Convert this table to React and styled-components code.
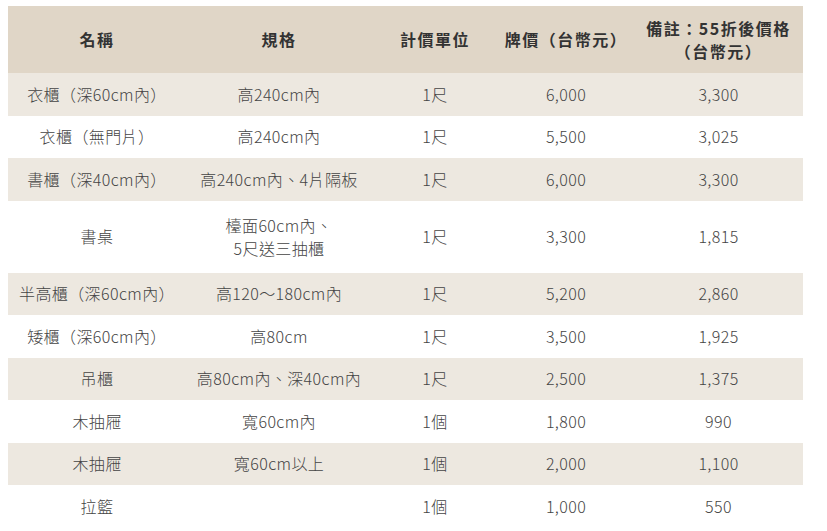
import React from "react";
import styled, { createGlobalStyle } from "styled-components";

const Global = createGlobalStyle`
  html, body { margin: 0; padding: 0; background: #ffffff; }
  body {
    font-family: "Noto Sans CJK TC", "Noto Sans", sans-serif;
  }
`;

const Page = styled.div`
  padding: 6px 24px 0 8px;
`;

const Table = styled.table`
  width: 795px;
  border-collapse: collapse;
  table-layout: fixed;
  font-family: "Noto Sans CJK TC", "Noto Sans", sans-serif;
`;

const HeadCell = styled.th`
  height: 67px;
  padding: 0 2px;
  background: #e0d6c7;
  color: #333333;
  font-size: 16px;
  font-weight: 700;
  line-height: 23px;
  letter-spacing: 1.5px;
  text-align: center;
  vertical-align: middle;
  white-space: nowrap;
`;

const Row = styled.tr`
  background: ${(p) => (p.$shaded ? "#ede8e0" : "#ffffff")};
`;

const Cell = styled.td`
  height: ${(p) => (p.$tall ? 72 : 42.5)}px;
  padding: 0 4px;
  color: #444444;
  font-size: 16px;
  font-weight: 300;
  line-height: 23px;
  letter-spacing: 0.4px;
  text-align: center;
  vertical-align: middle;
  white-space: nowrap;
`;

const widths = [178, 186, 126, 136, 169];

const rows = [
  ["衣櫃（深60cm內）", "高240cm內", "1尺", "6,000", "3,300"],
  ["衣櫃（無門片）", "高240cm內", "1尺", "5,500", "3,025"],
  ["書櫃（深40cm內）", "高240cm內、4片隔板", "1尺", "6,000", "3,300"],
  ["書桌", ["檯面60cm內、", "5尺送三抽櫃"], "1尺", "3,300", "1,815"],
  ["半高櫃（深60cm內）", "高120～180cm內", "1尺", "5,200", "2,860"],
  ["矮櫃（深60cm內）", "高80cm", "1尺", "3,500", "1,925"],
  ["吊櫃", "高80cm內、深40cm內", "1尺", "2,500", "1,375"],
  ["木抽屜", "寬60cm內", "1個", "1,800", "990"],
  ["木抽屜", "寬60cm以上", "1個", "2,000", "1,100"],
  ["拉籃", "", "1個", "1,000", "550"],
];

export default function App() {
  return (
    <Page>
      <Global />
      <Table>
        <colgroup>
          {widths.map((w, i) => (
            <col key={i} style={{ width: w }} />
          ))}
        </colgroup>
        <thead>
          <tr>
            <HeadCell>名稱</HeadCell>
            <HeadCell>規格</HeadCell>
            <HeadCell>計價單位</HeadCell>
            <HeadCell>牌價（台幣元）</HeadCell>
            <HeadCell>
              備註：55折後價格
              <br />
              （台幣元）
            </HeadCell>
          </tr>
        </thead>
        <tbody>
          {rows.map((r, i) => {
            const tall = r.some((c) => Array.isArray(c));
            return (
              <Row key={i} $shaded={i % 2 === 0}>
                {r.map((c, j) => (
                  <Cell key={j} $tall={tall}>
                    {Array.isArray(c)
                      ? c.map((line, k) => (
                          <React.Fragment key={k}>
                            {k > 0 && <br />}
                            {line}
                          </React.Fragment>
                        ))
                      : c}
                  </Cell>
                ))}
              </Row>
            );
          })}
        </tbody>
      </Table>
    </Page>
  );
}
